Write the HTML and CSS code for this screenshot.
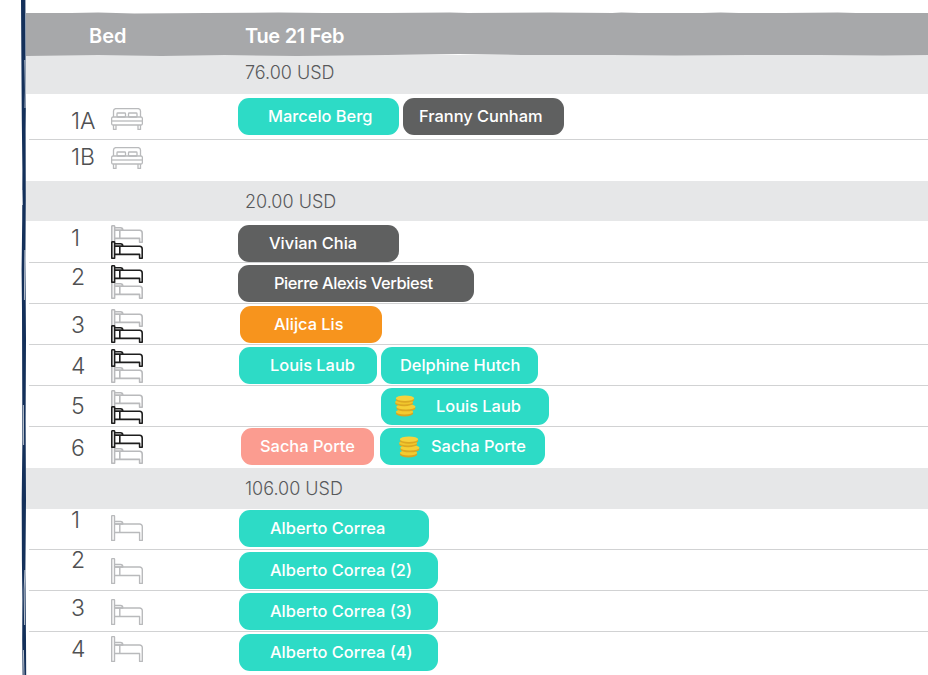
FILE: index.html
```html
<!DOCTYPE html>
<html lang="en">
<head>
<meta charset="utf-8">
<title>Bed calendar</title>
<link rel="stylesheet" href="styles.css">
</head>
<body>
<svg class="defs" width="0" height="0" aria-hidden="true">
  <symbol id="double" viewBox="0 0 32 22">
    <g fill="none" stroke="currentColor" stroke-width="1.3" stroke-linejoin="round">
      <path d="M2.5 9V3A2.5 2.5 0 0 1 5 .6H27A2.5 2.5 0 0 1 29.5 3V9"/>
      <rect x="6" y="5" width="8.5" height="4" rx=".8"/>
      <rect x="17.5" y="5" width="8.5" height="4" rx=".8"/>
      <rect x=".6" y="9" width="30.8" height="8" rx="1.5"/>
      <path d="M.6 13H31.4"/>
      <path d="M2.5 17V21.4H5V17M27 17V21.4H29.5V17"/>
    </g>
  </symbol>
  <symbol id="single" viewBox="0 0 32 26">
    <g fill="none" stroke="currentColor" stroke-width="1.4" stroke-linejoin="round">
      <path d="M.7 1.2A.6.6 0 0 1 1.3.6H2.9A.6.6 0 0 1 3.5 1.2V25.4H.7Z"/>
      <path d="M3.5 6.5H9.5Q11.8 6.5 11.8 9H3.5"/>
      <path d="M3.5 9H28.6A2.7 2.7 0 0 1 31.3 11.7V25.4H28.6V17.5H3.5"/>
      <path d="M8.8 9V17.5"/>
    </g>
  </symbol>
  <symbol id="bunk-bed" viewBox="0 0 32 18">
    <g fill="none" stroke-width="1.6" stroke-linejoin="round" stroke="currentColor">
      <path d="M.8 1.2A.6.6 0 0 1 1.4.8H3A.6.6 0 0 1 3.6 1.2V17.2H.8Z"/>
      <path d="M3.6 2.8H9.5Q11.8 2.8 11.8 5.2H3.6"/>
      <path d="M3.6 5.2H28.6A2.7 2.7 0 0 1 31.2 7.9V17.2H28.6V13.4H3.6"/>
      <path d="M8.8 5.2V13.4"/>
    </g>
  </symbol>
  <symbol id="coins" viewBox="0 0 24 24">
    <ellipse cx="11.5" cy="20" rx="9.5" ry="3.4" fill="#d9a520"/>
    <ellipse cx="11.5" cy="18.4" rx="9.5" ry="3" fill="#f3cb30"/>
    <ellipse cx="13" cy="14.4" rx="10.5" ry="3.4" fill="#dca822"/>
    <ellipse cx="13" cy="12.8" rx="10.5" ry="3" fill="#f5cf36"/>
    <ellipse cx="11" cy="9" rx="9.8" ry="3.2" fill="#dca822"/>
    <ellipse cx="11" cy="7.6" rx="9.8" ry="2.8" fill="#f0c62c"/>
    <ellipse cx="12" cy="5.2" rx="10" ry="3.2" fill="#dca822"/>
    <ellipse cx="12" cy="3.6" rx="10" ry="3" fill="#f6d23c"/>
  </symbol>
</svg>

<div class="page">
  <div class="rail">
    <svg class="rail-line" viewBox="0 0 6 675" preserveAspectRatio="none" aria-hidden="true">
      <path fill="#14305a" d="M0 0H4.4L4.6 60 5 90 4.6 130 4.8 200 4.4 260 5 340 4.6 420 5 500 4.4 570 5 640 5.2 675H1.6L1.2 640 1.4 600 .9 560 .7 500 1.4 440 1.2 380 1 310 .6 270 1.2 220 1.4 170 .8 120 .4 60Z"/>
      <path fill="none" stroke="#fff" stroke-width=".7" d="M3.8 60 4.4 90 4 108M.8 190 1.4 205M3.9 250 3.4 300M2.4 405 2.6 445M3.9 570 3.2 590 3.6 625M2.4 650 3 675"/>
    </svg>
  </div>

  <main class="sheet">
    <header class="head">
      <span class="head-bed">Bed</span>
      <span class="head-date">Tue 21 Feb</span>
    </header>

    <div class="band band-39">76.00 USD</div>

    <div class="row row-a1 first">
      <span class="num">1A</span>
      <svg class="ico ico-double"><use href="#double"/></svg>
      <div class="lane">
        <div class="pill teal" style="width:161px;padding-left:30px">Marcelo Berg</div>
        <div class="pill dark" style="width:161px;padding-left:16px;margin-left:4px">Franny Cunham</div>
      </div>
    </div>
    <div class="row row-a2">
      <span class="num">1B</span>
      <svg class="ico ico-double"><use href="#double"/></svg>
      <div class="lane"></div>
    </div>

    <div class="band band-40">20.00 USD</div>

    <div class="row row-b1 first">
      <span class="num">1</span>
      <svg class="ico ico-bunk" viewBox="0 0 32 34"><use href="#bunk-bed" class="off" width="32" height="18"/><use href="#bunk-bed" class="on" y="16" width="32" height="18"/></svg>
      <div class="lane">
        <div class="pill dark" style="width:161px;padding-left:31px">Vivian Chia</div>
      </div>
    </div>
    <div class="row row-b2">
      <span class="num">2</span>
      <svg class="ico ico-bunk" viewBox="0 0 32 34"><use href="#bunk-bed" class="off" y="16" width="32" height="18"/><use href="#bunk-bed" class="on" width="32" height="18"/></svg>
      <div class="lane">
        <div class="pill dark tight" style="width:236px;padding-left:36px">Pierre Alexis Verbiest</div>
      </div>
    </div>
    <div class="row row-b3">
      <span class="num">3</span>
      <svg class="ico ico-bunk" viewBox="0 0 32 34"><use href="#bunk-bed" class="off" width="32" height="18"/><use href="#bunk-bed" class="on" y="16" width="32" height="18"/></svg>
      <div class="lane">
        <div class="pill orange" style="width:142px;padding-left:34px;margin-left:2px">Alijca Lis</div>
      </div>
    </div>
    <div class="row row-b4">
      <span class="num">4</span>
      <svg class="ico ico-bunk" viewBox="0 0 32 34"><use href="#bunk-bed" class="off" y="16" width="32" height="18"/><use href="#bunk-bed" class="on" width="32" height="18"/></svg>
      <div class="lane">
        <div class="pill teal" style="width:138px;padding-left:31px;margin-left:1px">Louis Laub</div>
        <div class="pill teal" style="width:157px;padding-left:19px;margin-left:4px">Delphine Hutch</div>
      </div>
    </div>
    <div class="row row-b5">
      <span class="num">5</span>
      <svg class="ico ico-bunk" viewBox="0 0 32 34"><use href="#bunk-bed" class="off" width="32" height="18"/><use href="#bunk-bed" class="on" y="16" width="32" height="18"/></svg>
      <div class="lane">
        <div class="pill teal" style="width:168px;padding-left:55px;margin-left:143px">
          <svg class="coins coins-a"><use href="#coins"/></svg>Louis Laub
        </div>
      </div>
    </div>
    <div class="row row-b6">
      <span class="num">6</span>
      <svg class="ico ico-bunk" viewBox="0 0 32 34"><use href="#bunk-bed" class="off" y="16" width="32" height="18"/><use href="#bunk-bed" class="on" width="32" height="18"/></svg>
      <div class="lane">
        <div class="pill salmon" style="width:133px;padding-left:19px;margin-left:3px">Sacha Porte</div>
        <div class="pill teal" style="width:165px;padding-left:51px;margin-left:6px">
          <svg class="coins coins-b"><use href="#coins"/></svg>Sacha Porte
        </div>
      </div>
    </div>

    <div class="band band-41">106.00 USD</div>

    <div class="row row-c1 first">
      <span class="num">1</span>
      <svg class="ico ico-single"><use href="#single"/></svg>
      <div class="lane">
        <div class="pill teal" style="width:190px;padding-left:31px;margin-left:1px">Alberto Correa</div>
      </div>
    </div>
    <div class="row row-c2">
      <span class="num">2</span>
      <svg class="ico ico-single"><use href="#single"/></svg>
      <div class="lane">
        <div class="pill teal" style="width:199px;padding-left:31px;margin-left:1px">Alberto Correa (2)</div>
      </div>
    </div>
    <div class="row row-c3">
      <span class="num">3</span>
      <svg class="ico ico-single"><use href="#single"/></svg>
      <div class="lane">
        <div class="pill teal" style="width:199px;padding-left:31px;margin-left:1px">Alberto Correa (3)</div>
      </div>
    </div>
    <div class="row row-c4">
      <span class="num">4</span>
      <svg class="ico ico-single"><use href="#single"/></svg>
      <div class="lane">
        <div class="pill teal" style="width:199px;padding-left:31px;margin-left:1px">Alberto Correa (4)</div>
      </div>
    </div>
  </main>
</div>
</body>
</html>
```
FILE: styles.css
```css
* { box-sizing: border-box; }
html, body { margin: 0; height: 100%; background: #fff; }
body { font-family: Inter, "Noto Sans", sans-serif; color: #58595b; overflow: hidden; }
.defs { position: absolute; }

.page { display: flex; height: 675px; overflow: hidden; }
.rail { flex: 0 0 25px; min-width: 0; padding-left: 21px; }
.rail-line { display: block; width: 6px; height: 675px; }
.sheet { flex: 1; min-width: 0; padding-top: 11px; margin-left: 1px; }

.head {
  height: 46px;
  display: flex;
  align-items: center;
  padding-top: 3px;
  background: #a7a8aa;
  color: #fff;
  font-size: 20px;
  font-weight: 600;
  clip-path: polygon(0 2px, 5% 2px, 8% 1.5px, 12% 2.5px, 20% 2px, 28% 1.5px, 33% 2px, 40% 2px, 47% 1.5px, 49% 2px, 58% 1.5px, 65% 2px, 66% 1.5px, 68% 2px, 75% 2px, 77% 1.5px, 79% 2px, 84% 2px, 90% 1.5px, 92% 2px, 100% 2px,
    100% 44px, 95% 44.5px, 88% 44px, 80% 44px, 72% 44.5px, 65% 44px, 55% 44px, 48% 43px, 40% 44px, 30% 45px, 22% 44px, 15% 45px, 8% 44px, 0 45px);
  margin-bottom: -2px;
}
.head-bed { margin-left: 63px; width: 156px; }
.head-date { letter-spacing: -.3px; }

.band { background: #e6e7e8; padding-left: 219px; padding-top: 7px; font-size: 18px; line-height: 22px; font-weight: 300; }
.band-39 { height: 39px; }
.band-40 { height: 40px; padding-top: 10px; }
.band-41 { height: 41px; padding-top: 10px; }

.row {
  display: flex;
  align-items: flex-start;
  margin-left: 3px;
  padding-left: 42px;
  border-top: 1px solid #d1d2d3;
  height: var(--h, 41px);
}
.row.first { border-top: 0; }
.num { flex: 0 0 40px; margin-top: var(--n); font-size: 23px; line-height: 24px; font-weight: 300; color: #4f5052; }
.ico { display: block; flex: 0 0 32px; margin-top: var(--i); }
.ico-double { width: 32px; height: 22px; color: #b9babc; }
.ico-single { width: 32px; height: 26px; color: #b9babc; }
.ico-bunk { width: 32px; height: 34px; }
.on { color: #1e1e1e; }
.off { color: #b9babc; }
.lane { display: flex; margin-left: 95px; margin-top: var(--p); }

.pill {
  position: relative;
  height: 37px;
  border-radius: 11px;
  color: #fff;
  font-size: 16.4px;
  font-weight: 500;
  line-height: 36px;
  white-space: nowrap;
}
.tight { letter-spacing: -.4px; }
.teal { background: #2ddbc6; }
.dark { background: #5f6060; }
.orange { background: #f7941d; }
.salmon { background: #fb9c90; }

.coins { position: absolute; width: 22px; height: 22px; }
.coins-a { left: 13px; top: 7px; }
.coins-b { left: 18px; top: 8px; }

.row-a1 { --h: 45px; --n: 15px; --i: 14px; --p: 4px; }
.row-a2 { --h: 42px; --n: 5px; --i: 7px; --p: 0; }
.row-b1 { --h: 41px; --n: 5px; --i: 4px; --p: 4px; }
.row-b2 { --h: 41px; --n: 2px; --i: 2px; --p: 2px; }
.row-b3 { --h: 41px; --n: 9px; --i: 5px; --p: 2px; }
.row-b4 { --h: 41px; --n: 9px; --i: 4px; --p: 2px; }
.row-b5 { --h: 41px; --n: 8px; --i: 4px; --p: 2px; }
.row-b6 { --h: 42px; --n: 9px; --i: 3px; --p: 1px; }
.row-c1 { --h: 40px; --n: -1px; --i: 6px; --p: 1px; }
.row-c2 { --h: 41px; --n: -2px; --i: 8px; --p: 2px; }
.row-c3 { --h: 41px; --n: 5px; --i: 8px; --p: 2px; }
.row-c4 { --h: 44px; --n: 5px; --i: 4px; --p: 2px; }
```
